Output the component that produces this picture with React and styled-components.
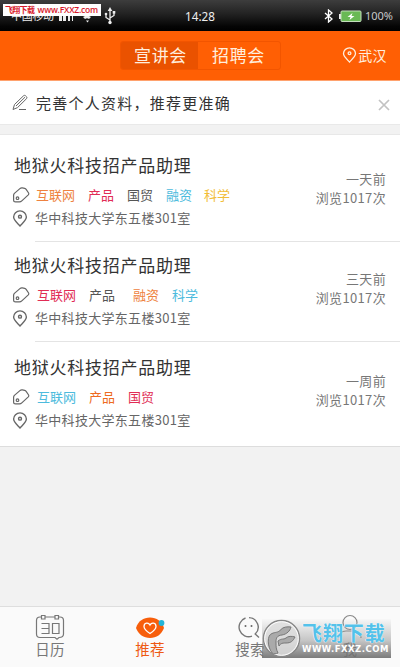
import React from "react";
import styled, { createGlobalStyle } from "styled-components";

const Global = createGlobalStyle`
  * { box-sizing: border-box; }
  body { margin: 0; background: #f2f2f2; }
`;

const Screen = styled.div`
  width: 400px;
  height: 667px;
  display: flex;
  flex-direction: column;
  overflow: hidden;
  background: #f2f2f2;
  font-family: "Noto Sans CJK SC", sans-serif;
  color: #333;
`;

const StatusBar = styled.header`
  position: relative;
  flex: none;
  height: 31px;
  display: grid;
  grid-template-columns: 1fr auto 1fr;
  align-items: center;
  padding: 0 7px 0 11px;
  background: linear-gradient(#3d3d3d, #222 45%, #050505 85%, #000);
  color: #eee;
  font: 12px/16px "Noto Sans", "Noto Sans CJK SC", sans-serif;
`;

const StatusGroup = styled.div`
  display: flex;
  align-items: center;
  justify-content: ${(p) => (p.$end ? "flex-end" : "flex-start")};
`;

const Carrier = styled.span`
  font-size: 11px;
  width: 46px;
  white-space: nowrap;
  letter-spacing: -0.3px;
`;

const Clock = styled.time`
  margin-right: 4px;
  font-size: 11.7px;
`;

const Percent = styled.span`
  font-size: 11px;
  color: #c9c9c9;
  letter-spacing: 0;
  margin-left: 3px;
`;

const SiteBadge = styled.div`
  position: absolute;
  left: 3px;
  top: 4px;
  width: 98px;
  height: 12px;
  display: flex;
  align-items: center;
  justify-content: space-between;
  padding: 0 3px 0 2px;
  background: #fff;
  color: #d8182a;
  white-space: nowrap;
`;

const BadgeName = styled.span`
  font: 700 8px/12px "Noto Sans CJK SC", sans-serif;
  letter-spacing: -0.7px;
`;

const BadgeUrl = styled.span`
  font: 600 8.5px/12px "Open Sans", sans-serif;
  letter-spacing: -0.2px;
`;

const NavBar = styled.nav`
  flex: none;
  height: 50px;
  display: grid;
  grid-template-columns: 1fr 161px 1fr;
  align-items: start;
  padding-top: 10px;
  background: #ff5f04;
  border-bottom: 1px solid #ffa26e;
  color: #ffeede;
`;

const Segments = styled.div`
  grid-column: 2;
  height: 29px;
  display: flex;
  border: 1px solid #f25500;
  border-radius: 3px;
  overflow: hidden;
`;

const Segment = styled.button`
  width: ${(p) => p.$width}px;
  border: 0;
  padding: 0 0 1px;
  text-indent: ${(p) => p.$indent}px;
  background: ${(p) => (p.$active ? "#ea5200" : "transparent")};
  color: inherit;
  font: 17px/26px "Noto Sans CJK SC", sans-serif;
  letter-spacing: 0.7px;
`;

const City = styled.div`
  display: flex;
  align-items: center;
  justify-content: flex-end;
  gap: 1px;
  height: 29px;
  padding-right: 13px;
  padding-bottom: 1px;
  font-size: 14px;
  line-height: 18px;
  letter-spacing: 0.4px;
`;

const Notice = styled.section`
  flex: none;
  height: 44px;
  display: flex;
  align-items: center;
  padding: 0 10px 0 12px;
  background: #fff;
  border-bottom: 1px solid #e9e9e9;
`;

const NoticeText = styled.p`
  flex: 1;
  margin: 0 0 0 7px;
  padding-bottom: 0;
  font-size: 15px;
  line-height: 22px;
  letter-spacing: 1.25px;
`;

const CloseIcon = styled.svg`
  width: 12px;
  height: 12px;
  margin-top: 4px;
`;

const List = styled.main`
  flex: none;
  height: 313px;
  margin-top: 9px;
  background: #fff;
  border-top: 1px solid #e8e8e8;
  border-bottom: 1px solid #ddd;
`;

const Job = styled.article`
  height: ${(p) => p.$height}px;
  display: flex;
  justify-content: space-between;
  padding: ${(p) => p.$top}px 14px 0 12px;
`;

const JobInfo = styled.div`
  display: flex;
  flex-direction: column;
`;

const Title = styled.h2`
  margin: 0 0 0 2px;
  font-size: 17px;
  line-height: 26px;
  font-weight: 400;
  letter-spacing: 0.75px;
`;

const TagRow = styled.div`
  display: flex;
  align-items: center;
  height: 24px;
  margin-top: 5px;
`;

const Tag = styled.span`
  margin-left: ${(p) => p.$gap}px;
  color: ${(p) => p.$color};
  font-size: 13px;
  line-height: 20px;
`;

const Venue = styled.div`
  display: flex;
  align-items: center;
  gap: 7px;
  height: 22px;
  color: #666;
  font-size: 13px;
  line-height: 20px;
  letter-spacing: 0.3px;
`;

const Meta = styled.div`
  display: flex;
  flex-direction: column;
  align-items: flex-end;
  padding-top: 18px;
  color: #777;
  font-size: 13px;
  line-height: 18.5px;
  letter-spacing: 0.35px;
`;

const Divider = styled.hr`
  height: 1px;
  margin: 0 0 0 35px;
  border: 0;
  background: #e4e4e4;
`;

const TabBar = styled.footer`
  position: relative;
  flex: none;
  height: 61px;
  margin-top: auto;
  display: grid;
  grid-template-columns: repeat(4, 1fr);
  background: #fafafa;
  border-top: 1px solid #dedede;
`;

const Tab = styled.button`
  display: flex;
  flex-direction: column;
  align-items: center;
  padding: 6px 0 0;
  border: 0;
  background: none;
  color: ${(p) => (p.$active ? "#ee5a13" : "#777")};
  font: 14.5px/20px "Noto Sans CJK SC", sans-serif;
  letter-spacing: 0.3px;
`;

const TabIcon = styled.svg`
  width: 34px;
  height: 28px;
  margin-bottom: -2px;
  flex: none;
`;

const Watermark = styled.div`
  position: absolute;
  left: 262px;
  top: 12px;
  width: 129px;
  height: 39px;
  display: flex;
  align-items: center;
  background: linear-gradient(rgba(190, 190, 190, 0.05), rgba(145, 145, 145, 0.5) 55%, rgba(110, 110, 110, 0.9));
`;

const MarkText = styled.div`
  display: flex;
  flex-direction: column;
  margin-left: 1px;
`;

const MarkName = styled.span`
  color: #54c2ea;
  font: 700 20px/22px "Noto Sans CJK SC", sans-serif;
  letter-spacing: 0.9px;
  text-shadow: 0 0 1px #fff, 0 0 1px #fff;
`;

const MarkUrl = styled.span`
  color: #fff;
  font: 700 8.5px/11px "DejaVu Sans", sans-serif;
  letter-spacing: 0.5px;
  white-space: nowrap;
`;

const PinIcon = ({ size = 15 }) => (
  <svg width={size} height={size + 1} viewBox="0 0 15 16" fill="none" stroke="currentColor" strokeWidth="1.3">
    <path d="M7.5 15C5.800 13 1.500 9.800 1.500 6.600a6 5.800 0 0 1 12 0C13.500 9.800 9.200 13 7.500 15Z" />
    <circle cx="7.5" cy="6.3" r="1.4" />
  </svg>
);

const TagIcon = () => (
  <svg width="18" height="18" viewBox="0 0 18 18" fill="none" stroke="#666" strokeWidth="1.2" strokeLinejoin="round">
    <path d="M1.600 9.300Q1.600 8.200 2.400 7.400L7.900 2.600Q9 1.600 10.400 1.900L12.600 2.400Q13.700 2.700 14.300 3.600L16.600 7Q17.200 8 16.300 8.900L9.800 14.900Q8.800 15.900 7.400 15.900H3.500Q1.600 15.900 1.600 14Z" />
    <circle cx="5.5" cy="12.2" r="1.3" />
  </svg>
);

const jobs = [
  {
    top: 17, height: 106, when: "一天前",
    tags: [["互联网", "#ee8240", 6], ["产品", "#e12c55", 13], ["国贸", "#555", 13], ["融资", "#4dbbdd", 13], ["科学", "#f2bd37", 12]],
  },
  {
    top: 10, height: 99, when: "三天前",
    tags: [["互联网", "#e12c55", 7], ["产品", "#555", 13], ["融资", "#ee8240", 18], ["科学", "#4dbbdd", 13]],
  },
  {
    top: 12, height: 105, when: "一周前",
    tags: [["互联网", "#4dbbdd", 7], ["产品", "#ee6a20", 13], ["国贸", "#e12c55", 13]],
  },
];

export default function App() {
  return (
    <Screen>
      <Global />
      <StatusBar>
        <StatusGroup>
          <Carrier>中国移动</Carrier>
          <svg width="63" height="20" viewBox="0 0 63 20" fill="#eee">
            <path d="M2 8h3v7H2zM6 7h3v8H6zM11 6h2v9h-2zM15 5h1v10h-1z" />
            <path d="M26 11q4-3 8 0l-2 2q-2-1.500-4 0zM29 14.500h3l-1.500 2z" />
            <path d="M53 1 50.700 5h4.600z" />
            <path d="M53 4v12M53 14l-4-2.500V8M53 12l4-2.500V6" fill="none" stroke="#eee" strokeWidth="1.3" />
            <circle cx="53" cy="16.5" r="1.7" /><circle cx="49" cy="8" r="1.3" /><path d="M55.700 5h2.600v2.600h-2.600z" />
          </svg>
        </StatusGroup>
        <Clock>14:28</Clock>
        <StatusGroup $end>
          <svg width="39" height="14" viewBox="0 0 39 14" fill="none">
            <path d="m2 4 7 6-3.500 3V1L9 4l-7 6" stroke="#fff" strokeWidth="1.3" />
            <path d="M18 5h-2v5h2" fill="#eee" />
            <rect x="18" y="2" width="20" height="10.5" rx="1" fill="#69b955" stroke="#c4dfbd" />
            <path d="m29.500 4-5 4h3l-1 3 5-4h-3z" fill="#fff" />
          </svg>
          <Percent>100%</Percent>
        </StatusGroup>
        <SiteBadge>
          <BadgeName>飞翔下载</BadgeName>
          <BadgeUrl>www.FXXZ.com</BadgeUrl>
        </SiteBadge>
      </StatusBar>

      <NavBar>
        <Segments>
          <Segment $width={77} $indent={3} $active>宣讲会</Segment>
          <Segment $width={82} $indent={0}>招聘会</Segment>
        </Segments>
        <City><PinIcon size={15} />武汉</City>
      </NavBar>

      <Notice>
        <svg width="17" height="17" viewBox="0 0 17 17" fill="none" stroke="#666" strokeWidth="1">
          <path d="M1 15.500 2.500 10.500 11.500 1.800Q12.500.900 13.600 1.800L14.500 2.700Q15.400 3.700 14.500 4.700L5.500 13.600 1 15.500ZM4 12 13 3.200M7 15.500h7" />
        </svg>
        <NoticeText>完善个人资料，推荐更准确</NoticeText>
        <CloseIcon viewBox="0 0 12 12" stroke="#c2c2c2" strokeWidth="1.7">
          <path d="m1 1 10 10M11 1 1 11" />
        </CloseIcon>
      </Notice>

      <List>
        {jobs.map((job, i) => (
          <React.Fragment key={job.when}>
            {i > 0 && <Divider />}
            <Job $top={job.top} $height={job.height}>
              <JobInfo>
                <Title>地狱火科技招产品助理</Title>
                <TagRow>
                  <TagIcon />
                  {job.tags.map(([name, color, gap]) => (
                    <Tag key={name} $color={color} $gap={gap}>{name}</Tag>
                  ))}
                </TagRow>
                <Venue><PinIcon size={16} />华中科技大学东五楼301室</Venue>
              </JobInfo>
              <Meta>
                <span>{job.when}</span>
                <span>浏览1017次</span>
              </Meta>
            </Job>
          </React.Fragment>
        ))}
      </List>

      <TabBar>
        <Tab>
          <TabIcon viewBox="0 0 34 28" fill="none" stroke="#777" strokeWidth="1.2">
            <path d="M8 4H7Q3.500 4 3.500 7.500V21q0 3.500 3.500 3.500h15l2 1.700 2-1.700q4.500 0 4.500-3.500V7.500Q30.500 4 27 4h-1M12 4h10" />
            <path d="M8.500 2.500h3.500v3.500H8.500zM22 2.500h3.500v3.500H22z" />
            <path d="M8.500 10.500H16v10H8.500M8.500 15.500H16M19.500 10.500H26v10h-6.500z" />
          </TabIcon>
          日历
        </Tab>
        <Tab $active>
          <TabIcon viewBox="0 0 34 28" fill="none">
            <path d="M3 15C5 8 10.500 4.500 17 4.500S29 8 31 15C28.500 21.500 23.500 25 17 25S5.500 21.500 3 15Z" fill="#f75e0b" />
            <path d="M17 20.500c-3-2-6-4.500-6-7 0-4 4.500-4.500 6-1.500 1.500-3 6-2.500 6 1.500 0 2.500-3 5-6 7Z" stroke="#fff" strokeWidth="1.3" />
            <circle cx="28.5" cy="10" r="2.9" fill="#22b5d9" />
          </TabIcon>
          推荐
        </Tab>
        <Tab>
          <TabIcon viewBox="0 0 34 28" fill="none" stroke="#777" strokeWidth="1.4">
            <path d="M12.500 5A9.500 9.500 0 1 0 19 23.200M16 4.600A9.500 9.500 0 0 1 22.200 21L26 24.500" />
            <circle cx="12.5" cy="13" r="1" fill="#666" stroke="none" />
            <circle cx="18.5" cy="13" r="1" fill="#666" stroke="none" />
          </TabIcon>
          搜索
        </Tab>
        <Tab>
          <TabIcon viewBox="0 0 34 28" fill="none" stroke="#888" strokeWidth="1.2">
            <circle cx="17" cy="9.5" r="7" /><path d="M6 25q0-7 7-7h8q7 0 7 7" />
          </TabIcon>
          我
        </Tab>
        <Watermark>
          <svg width="39" height="39" viewBox="0 0 39 39" fill="none">
            <circle cx="19.5" cy="19.5" r="18" fill="#ddd" fillOpacity=".85" stroke="#888" strokeWidth="1.5" />
            <circle cx="19.5" cy="19.5" r="16.8" stroke="#fff" />
            <path d="M10 34C5 27 5 16 10 14.500c3-1.500 6-.500 9-4 2-2.500 6-3 10-2.500-1 4-4 7-9 8-5 .500-6 3-6 7 0 5 0 7 2 11-2 1-4 1-6 0Z" fill="#aaa" stroke="#777" />
            <path d="M16 22c4-3 5-1 8-3 2-2 6-2 9-1-2 4-4 6-9 6-3 0-5 0-7 3Z" fill="#aaa" stroke="#777" />
          </svg>
          <MarkText>
            <MarkName>飞翔下载</MarkName>
            <MarkUrl>WWW.FXXZ.COM</MarkUrl>
          </MarkText>
        </Watermark>
      </TabBar>
    </Screen>
  );
}
